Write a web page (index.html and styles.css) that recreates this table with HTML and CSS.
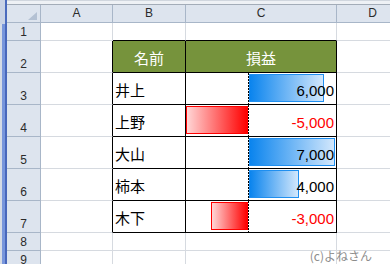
FILE: index.html
```html
<!DOCTYPE html>
<html lang="ja">
<head>
    <meta charset="UTF-8">
    <title>損益 データバー</title>
    <link rel="stylesheet" href="styles.css">
</head>
<body>
<div class="window">
    <div class="edge">
        <div class="grip"></div>
        <div class="rail"></div>
    </div>

    <div class="main">
        <div class="toolbar"></div>

        <div class="sheet">
            <!-- 列見出し -->
            <div class="hd corner"><span class="tri"></span></div>
            <div class="hd col">A</div>
            <div class="hd col">B</div>
            <div class="hd col">C</div>
            <div class="hd col">D</div>

            <!-- 1 -->
            <div class="hd row">1</div>
            <div class="cell"></div>
            <div class="cell top"></div>
            <div class="cell top"></div>
            <div class="cell"></div>

            <!-- 2 -->
            <div class="hd row">2</div>
            <div class="cell left"></div>
            <div class="cell tc th">名前</div>
            <div class="cell tc th">損益</div>
            <div class="cell"></div>

            <!-- 3 -->
            <div class="hd row">3</div>
            <div class="cell left"></div>
            <div class="cell tc name">井上</div>
            <div class="cell tc val">
                <div class="neg"></div>
                <div class="axis"></div>
                <div class="pos"><span class="bar bar-pos" style="width: 75px"></span></div>
                <span class="num">6,000</span>
            </div>
            <div class="cell"></div>

            <!-- 4 -->
            <div class="hd row">4</div>
            <div class="cell left"></div>
            <div class="cell tc name">上野</div>
            <div class="cell tc val">
                <div class="neg"><span class="bar bar-neg" style="width: 62px"></span></div>
                <div class="axis"></div>
                <div class="pos"></div>
                <span class="num minus">-5,000</span>
            </div>
            <div class="cell"></div>

            <!-- 5 -->
            <div class="hd row">5</div>
            <div class="cell left"></div>
            <div class="cell tc name">大山</div>
            <div class="cell tc val">
                <div class="neg"></div>
                <div class="axis"></div>
                <div class="pos"><span class="bar bar-pos" style="width: 86px"></span></div>
                <span class="num">7,000</span>
            </div>
            <div class="cell"></div>

            <!-- 6 -->
            <div class="hd row">6</div>
            <div class="cell left"></div>
            <div class="cell tc name">柿本</div>
            <div class="cell tc val">
                <div class="neg"></div>
                <div class="axis"></div>
                <div class="pos"><span class="bar bar-pos" style="width: 50px"></span></div>
                <span class="num">4,000</span>
            </div>
            <div class="cell"></div>

            <!-- 7 -->
            <div class="hd row">7</div>
            <div class="cell left"></div>
            <div class="cell tc name">木下</div>
            <div class="cell tc val">
                <div class="neg"><span class="bar bar-neg" style="width: 37px"></span></div>
                <div class="axis"></div>
                <div class="pos"></div>
                <span class="num minus">-3,000</span>
            </div>
            <div class="cell"></div>

            <!-- 8, 9 -->
            <div class="hd row">8</div>
            <div class="cell"></div>
            <div class="cell"></div>
            <div class="cell"></div>
            <div class="cell"></div>

            <div class="hd row">9</div>
            <div class="cell"></div>
            <div class="cell"></div>
            <div class="cell"></div>
            <div class="cell"></div>
        </div>

        <div class="credit">(c)よねさん</div>
    </div>
</div>
</body>
</html>
```

FILE: styles.css
```css
:root {
    --grid-line: #d6dae0;
    --head-bg: #dde4ee;
    --head-line: #a8b6c8;
    --head-green: #76933c;
    --bar-blue: #0a84ee;
    --bar-blue-light: #d2e7fc;
    --bar-red: #ff0000;
    --bar-red-light: #ffd6d6;
}

* {
    margin: 0;
    padding: 0;
    box-sizing: border-box;
}

body {
    font-family: "Liberation Sans", "Noto Sans CJK JP", sans-serif;
    background: #fff;
    width: 390px;
    height: 264px;
    overflow: hidden;
}

.window {
    display: flex;
    height: 264px;
}

/* 左端のウィンドウ枠 */
.edge {
    width: 7px;
    flex: none;
    display: flex;
    flex-direction: column;
}

.grip {
    height: 24px;
    background: linear-gradient(to right, #c9d3e6 0 5px, #4b6bbd 5px 7px);
}

.rail {
    flex: 1;
    background: linear-gradient(to right, #d5dbe5 0 2px, #7896dc 2px 5px, #4867bb 5px 7px);
}

.main {
    flex: 1;
    position: relative;
    display: flex;
    flex-direction: column;
    overflow: hidden;
}

.toolbar {
    height: 5px;
    flex: none;
    background: #eef1f5;
    border-top: 1px solid #d0d6de;
    border-bottom: 1px solid #a3acb8;
}

.sheet {
    display: grid;
    grid-template-columns: 34px 72px 73px 151px 72px;
    grid-template-rows: 18px 18px repeat(6, 32px) 18px 18px;
}

.cell {
    border-right: 1px solid var(--grid-line);
    border-bottom: 1px solid var(--grid-line);
}

/* 見出し */
.hd {
    background: var(--head-bg);
    border-right: 1px solid var(--head-line);
    border-bottom: 1px solid var(--head-line);
    color: #2b2b2b;
    font-size: 12px;
    line-height: 12px;
    display: flex;
    justify-content: center;
    align-items: flex-end;
    padding-bottom: 2px;
}

.hd.col {
    padding-bottom: 3px;
}

.corner {
    justify-content: flex-end;
    padding: 0 3px 2px 0;
}

.tri {
    width: 0;
    height: 0;
    border-left: 9px solid transparent;
    border-bottom: 8px solid #b4c1d3;
}

/* 表の罫線 */
.left {
    border-right-color: #000;
}

.top {
    border-bottom-color: #000;
}

.tc {
    border-right-color: #000;
    border-bottom-color: #000;
}

.th {
    background: var(--head-green);
    color: #fff;
    font-family: "Noto Sans CJK JP", sans-serif;
    font-size: 15px;
    line-height: 15px;
    display: flex;
    justify-content: center;
    align-items: flex-end;
    padding-bottom: 7px;
}

.name {
    font-family: "Noto Sans CJK JP", sans-serif;
    font-size: 15px;
    line-height: 15px;
    display: flex;
    align-items: flex-end;
    padding: 0 0 7px 2px;
}

/* データバー */
.val {
    display: grid;
    grid-template-columns: 62px 1px 1fr;
}

.neg {
    grid-column: 1;
    grid-row: 1;
    display: flex;
    justify-content: flex-end;
    align-items: flex-start;
}

.axis {
    grid-column: 2;
    grid-row: 1;
    background: repeating-linear-gradient(to bottom, #000 0 2px, transparent 2px 3px);
}

.pos {
    grid-column: 3;
    grid-row: 1;
    display: flex;
    align-items: flex-start;
}

.bar {
    height: 28px;
    margin-top: 1px;
}

.bar-pos {
    background: linear-gradient(to right, var(--bar-blue), var(--bar-blue-light));
    border: 1px solid #1f8ff0;
}

.bar-neg {
    background: linear-gradient(to right, var(--bar-red-light), var(--bar-red));
    border: 1px solid var(--bar-red);
}

.num {
    grid-column: 1 / -1;
    grid-row: 1;
    justify-self: end;
    align-self: end;
    font-size: 15px;
    line-height: 15px;
    padding-right: 2px;
    margin-bottom: 6px;
}

.num.minus {
    color: var(--bar-red);
}

.credit {
    position: absolute;
    right: 18px;
    bottom: 2px;
    font-family: "Noto Sans CJK JP", sans-serif;
    font-size: 12px;
    line-height: 12px;
    color: #8c8c8c;
}
```
